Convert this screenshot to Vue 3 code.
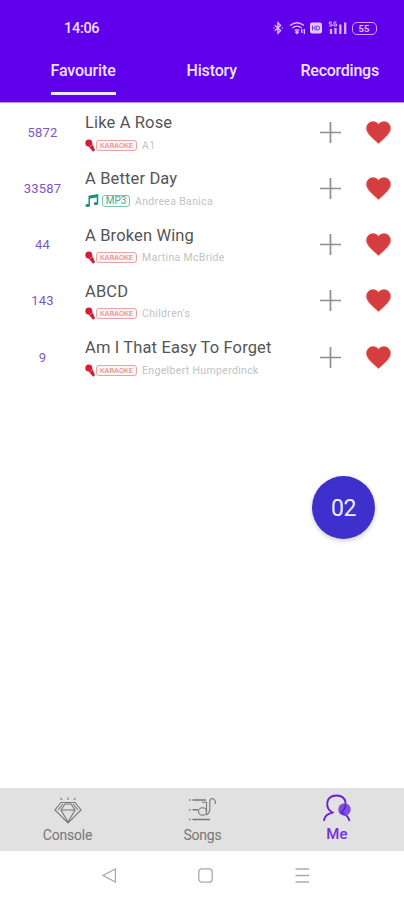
<script setup>
const songs = [
  { id: '5872', title: 'Like A Rose', type: 'KARAOKE', artist: 'A1' },
  { id: '33587', title: 'A Better Day', type: 'MP3', artist: 'Andreea Banica' },
  { id: '44', title: 'A Broken Wing', type: 'KARAOKE', artist: 'Martina McBride' },
  { id: '143', title: 'ABCD', type: 'KARAOKE', artist: "Children's" },
  { id: '9', title: 'Am I That Easy To Forget', type: 'KARAOKE', artist: 'Engelbert Humperdinck' },
]
</script>

<template>
  <div class="screen">
    <header>
      <div class="status">
        <span class="time">14:06</span>
        <div class="status-icons">
          <svg width="10" height="14" viewBox="0 0 10 14"><path d="M1.8 4.2 7.6 9.6 4.9 12.3V1.7l2.7 2.7-5.8 5.4" /><path d="M.3 7h1M8.7 7h1" /></svg>
          <svg class="wifi" width="17" height="14" viewBox="0 0 17 14"><path d="M1 4.5q7-5.5 14 0M3.3 7q4.7-3.7 9.4 0M5.7 9.5q2.3-1.8 4.6 0" /><path d="m8 10-1.2 1.2L8 12.5l1.2-1.3zM12.7 8v4M15.3 8v5" /></svg>
          <svg class="hd" width="12" height="12" viewBox="0 0 12 12"><rect width="12" height="11" y=".5" rx="2" /><path d="M2.5 3.5v5M5 3.5v5M2.5 6H5M6.7 4h1q2 0 2 2t-2 2h-1z" /></svg>
          <svg class="signal" width="19" height="14" viewBox="0 0 19 14"><path d="M4 1H1.3v2H4v2H1M8.5 1H6v4h2.5V3H7" /><path class="bars" d="M3 13V8M7.5 13V7M12.3 13V3.5M17.2 13V1.5" /></svg>
          <span class="battery">55</span>
        </div>
      </div>
      <nav class="tabs">
        <span class="tab active">Favourite</span>
        <span class="tab history">History</span>
        <span class="tab recordings">Recordings</span>
      </nav>
    </header>

    <main>
      <div v-for="song in songs" :key="song.id" class="song">
        <span class="number">{{ song.id }}</span>
        <div class="details">
          <div class="title">{{ song.title }}</div>
          <div class="meta">
            <svg v-if="song.type === 'KARAOKE'" width="11" height="13" viewBox="0 0 11 13"><circle cx="3.8" cy="4" r="3.5" fill="#d51e35" /><path d="m3.4 7.2 3.8-3 2.8 7-1.9 1.6z" fill="#cf1e34" /><path d="m4.4 8 3.5-2.7" stroke="#f8c7cc" stroke-width=".5" /></svg>
            <svg v-else width="14" height="14" viewBox="0 0 14 14"><path d="M4.2 11.5V2.4L12.5.9v8.4M4.2 4.1l8.3-1.5" fill="none" stroke="#218f75" stroke-width="1.5" /><ellipse cx="2.7" cy="11.4" rx="2.2" ry="1.7" fill="#218f75" /><ellipse cx="11" cy="9.6" rx="2.2" ry="1.7" fill="#218f75" /></svg>
            <span class="badge" :class="{ mp3: song.type === 'MP3' }">{{ song.type }}</span>
            <span class="artist">{{ song.artist }}</span>
          </div>
        </div>
        <svg class="plus" width="21" height="21" viewBox="0 0 21 21"><path d="M10.5 0v21M0 10.5h21" /></svg>
        <svg class="heart" width="25" height="23" viewBox="0 0 25 23"><path d="M12.5 22.5 10.8 21C4.3 15.2.5 11.8.5 7.2.5 3.5 3.4.6 7.1.6c2.1 0 4.1 1 5.4 2.6C13.8 1.6 15.8.6 17.9.6c3.7 0 6.6 2.9 6.6 6.6 0 4.6-3.8 8-10.3 13.8z" /></svg>
      </div>
      <button class="queue">02</button>
    </main>

    <nav class="bottom">
      <div class="item console">
        <svg width="28" height="28" viewBox="0 0 28 28"><path d="M7 5.5h14l6 7.5L14 26 1 13zM7 13l4-6h6l4 6-7 12zM7 13h14M4 13l5-6M24 13l-5-6M6.5.8l1.5 2M14 .5V3M21.5.8l-1.5 2" /></svg>
        <span>Console</span>
      </div>
      <div class="item songs">
        <svg width="28" height="26" viewBox="0 0 28 26"><path d="M3.5 3H17M3.5 12.7H9M3.5 22.5H21M0 3h1.5M0 12.7h1.5M0 22.5h1.5" stroke-width="1.6" /><ellipse cx="13.5" cy="14.5" rx="4" ry="3.8" /><path d="M17.5 14.5V5.3H13M17 18q3.8-1.5 3.8-6.5V5q0-4 3.3-3.3 2.4.6 2.4 5.3" /></svg>
        <span>Songs</span>
      </div>
      <div class="item me">
        <svg width="28" height="28" viewBox="0 0 28 28"><path d="M1 27q.5-5.5 5.5-7.3l3-1.2C1.5 14 2.5 1.5 13.5 1.5S25 14 18 18.5l2.5 1.2q4.5 1.8 6 7.3" stroke-width="1.8" /><circle cx="21.5" cy="15.5" r="6.2" fill="#8050dd" stroke="none" /><path d="M22.5 10q.5 5-4.5 8.5l4 2.2" stroke="#5721ce" stroke-width="1.5" /></svg>
        <span>Me</span>
      </div>
    </nav>
    <footer>
      <svg width="15" height="15" viewBox="0 0 15 15"><path d="M13.4 1v13L1 7.5z" /></svg>
      <svg width="15" height="15" viewBox="0 0 15 15"><rect x=".8" y=".8" width="13.4" height="13.4" rx="3" /></svg>
      <svg width="15" height="15" viewBox="0 0 15 15"><path d="M.5 1h13.5M.5 7.5h13.5M.5 14h13.5" /></svg>
    </footer>
  </div>
</template>

<style>
body { margin: 0; }
</style>
<style scoped>
.screen { width: 404px; height: 900px; display: flex; flex-direction: column; overflow: hidden; background: #fff; font-family: Roboto, "Liberation Sans", sans-serif; }
svg { display: block; flex: none; }
header { height: 103px; box-sizing: border-box; background: #6000ea; color: #eee3ff; border-bottom: 1px solid #b995ef; flex: none; }
.status { height: 50px; padding: 6px 27.5px 0 64px; box-sizing: border-box; display: flex; align-items: center; justify-content: space-between; }
.time { font-size: 14.5px; font-weight: 500; letter-spacing: -.3px; }
.status-icons { display: flex; align-items: center; }
.status-icons svg { fill: none; stroke: #d9bcff; stroke-width: 1.4; }
.status-icons .wifi { margin-left: 6px; }
.status-icons .hd { margin-left: 4px; fill: #e0caff; stroke: none; }
.hd path { fill: none; stroke: #7938dc; stroke-width: 1; }
.status-icons .signal { margin-left: 6px; stroke-width: 1; }
.signal .bars { stroke-width: 2.2; }
.battery { width: 25px; height: 13px; margin-left: 5px; box-sizing: border-box; border: 1.5px solid #cba8fb; border-radius: 5px; font-size: 9.5px; line-height: 11px; text-align: center; font-weight: 700; color: #dcc4ff; }
.tabs { display: flex; height: 45px; padding-left: 50.5px; }
.tab { font-size: 16px; font-weight: 500; line-height: 42px; width: 65.5px; height: 45px; box-sizing: border-box; white-space: nowrap; letter-spacing: -.16px; }
.active { border-bottom: 3px solid #eee3ff; }
.history { margin-left: 70.5px; }
.recordings { margin-left: 48.5px; letter-spacing: -.25px; }
main { flex: 1; position: relative; padding-top: 1px; }
.song { height: 56.25px; display: grid; grid-template-columns: 85px 235px 46px 25px; align-items: center; }
.number { text-align: center; color: #8155bf; font-size: 13px; letter-spacing: .15px; }
.details { min-width: 0; align-self: start; padding-top: 8px; }
.title { font-size: 16.5px; font-weight: 400; line-height: 22px; letter-spacing: .14px; color: #555; white-space: nowrap; }
.meta { height: 14px; display: flex; align-items: center; margin-top: 4.2px; }
.badge { width: 41px; height: 11px; box-sizing: border-box; border: 1px solid #e7a3a9; border-radius: 3px; background: #fff3f3; color: #dc7c84; font-size: 7.5px; line-height: 10px; text-align: center; }
.mp3 { width: 28px; height: 12px; border-color: #7ac3b1; background: #f3fcf8; color: #4eab94; font-size: 10px; margin-left: 3px; }
.artist { margin-left: 5px; font-size: 10.5px; letter-spacing: .34px; color: #c2c2c2; white-space: nowrap; }
.plus { stroke: #8d8d8d; stroke-width: 1.7; }
.heart { fill: #d53d41; stroke: #db6b59; stroke-width: .6; }
.queue { position: absolute; left: 312px; top: 373px; width: 63px; height: 63px; padding: 2px 0 0; border: 0; border-radius: 50%; background: #3e30cc; color: #f1edff; font-family: inherit; font-size: 23px; letter-spacing: -.4px; box-shadow: 0 2px 5px #0003; }
.bottom { height: 63px; flex: none; background: #e1e1e1; display: grid; grid-template-columns: 135px 135px 134px; }
.item { display: flex; flex-direction: column; align-items: center; color: #777; font-size: 14px; letter-spacing: -.2px; padding-top: 9px; }
.item svg { fill: none; stroke: #777; stroke-width: 1.1; height: 28px; }
.item span { line-height: 20px; }
.item.songs svg { height: 26px; margin-bottom: 2px; }
.item.me { padding-top: 6px; color: #7430dc; font-size: 15px; font-weight: 500; letter-spacing: .2px; }
.item.me svg { stroke: #681ddc; margin-bottom: 2px; }
footer { height: 49px; flex: none; display: flex; justify-content: center; align-items: center; gap: 81.5px; padding-left: 7px; box-sizing: border-box; background: #fefefe; }
footer svg { fill: none; stroke: #aaa; stroke-width: 1.3; }
</style>
